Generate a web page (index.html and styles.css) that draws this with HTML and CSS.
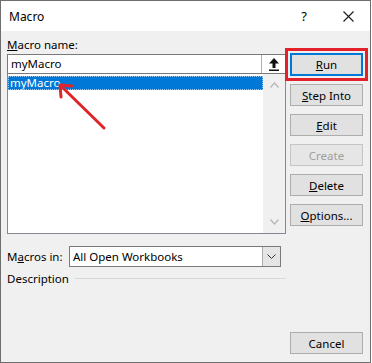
FILE: index.html
```html
<!DOCTYPE html>
<html lang="en">
  <head>
    <meta charset="UTF-8" />
    <title>Macro</title>
    <link rel="stylesheet" href="styles.css">
  </head>
  <body>
    <div class="window">
      <div class="titlebar">
        <span class="title">Macro</span>
        <span class="help">?</span>
        <span class="close">
          <svg width="11" height="11" viewBox="0 0 11 11"><path d="M0.5 0.5 L10.5 10.5 M10.5 0.5 L0.5 10.5" stroke="#1a1a1a" stroke-width="1.1" fill="none" /></svg>
        </span>
      </div>

      <div class="content">
        <div class="left">
          <div class="field-label"><u>M</u>acro name:</div>
          <div class="name-input">
            <span class="name-text">myMacro</span>
            <span class="up-btn">
              <svg width="10" height="13" viewBox="0 0 10 13"><path d="M5 0 L10 5.5 H6.5 V10 H3.5 V5.5 H0 Z" fill="#111" /><rect x="0" y="11.5" width="10" height="1.5" fill="#111" /></svg>
            </span>
          </div>

          <div class="list">
            <div class="list-items">
              <div class="item selected">myMacro</div>
            </div>
            <div class="scrollbar">
              <svg width="9" height="6" viewBox="0 0 9 6"><path d="M0.5 5.5 L4.5 1 L8.5 5.5" stroke="#b5b5b5" stroke-width="1.2" fill="none" /></svg>
              <svg width="9" height="6" viewBox="0 0 9 6"><path d="M0.5 0.5 L4.5 5 L8.5 0.5" stroke="#b5b5b5" stroke-width="1.2" fill="none" /></svg>
            </div>
          </div>

          <div class="macros-in">
            <span class="macros-label">M<u>a</u>cros in:</span>
            <div class="combo">
              <span class="combo-text">All Open Workbooks</span>
              <span class="combo-btn">
                <svg width="9" height="5" viewBox="0 0 9 5"><path d="M0.5 0.5 L4.5 4.5 L8.5 0.5" stroke="#333" stroke-width="1" fill="none" /></svg>
              </span>
            </div>
          </div>

          <div class="description">
            <span>Description</span>
            <span class="rule"></span>
          </div>
        </div>

        <div class="buttons">
          <button class="btn default"><u>R</u>un</button>
          <button class="btn"><u>S</u>tep Into</button>
          <button class="btn"><u>E</u>dit</button>
          <button class="btn disabled">Create</button>
          <button class="btn"><u>D</u>elete</button>
          <button class="btn"><u>O</u>ptions...</button>
          <button class="btn cancel">Cancel</button>
        </div>
      </div>

      <!-- annotation arrow -->
      <svg class="arrow" width="372" height="363" viewBox="0 0 372 363">
        <path d="M104 128 L61 86" stroke="#e0242b" stroke-width="3" fill="none" stroke-linecap="round" />
        <path d="M61 97 L60 85 L72 86" stroke="#e0242b" stroke-width="3" fill="none" stroke-linecap="round" stroke-linejoin="round" />
      </svg>
    </div>
  </body>
</html>
```

FILE: styles.css
```css
html,
body {
  margin: 0;
  padding: 0;
}

body {
  font-family: "Noto Sans", "Open Sans", sans-serif;
  font-size: 11.5px;
  color: #000;
  background: #fff;
}

.window {
  position: relative;
  width: 371px;
  height: 363px;
  box-sizing: border-box;
  border: 1px solid #6e6e6e;
  background-color: #f0f0f0;
  display: flex;
  flex-direction: column;
}

.titlebar {
  height: 30px;
  background-color: #fff;
  display: flex;
  align-items: center;
}

.title {
  margin-left: 8px;
  font-size: 12px;
  flex: 1;
}

.help {
  font-size: 13px;
  margin-right: 36px;
}

.close {
  display: flex;
  margin-right: 16px;
}

.content {
  flex: 1;
  display: flex;
  gap: 4px;
  padding: 0 6px 0 6px;
}

/* left column */
.left {
  width: 279px;
  padding-top: 6px;
}

.field-label {
  height: 16px;
  line-height: 16px;
  margin-bottom: 1px;
}

.name-input {
  display: flex;
  height: 20px;
  box-sizing: border-box;
  border: 1px solid #7a7a7a;
  background-color: #fff;
}

.name-text {
  flex: 1;
  line-height: 18px;
  padding-left: 3px;
}

.up-btn {
  width: 23px;
  display: flex;
  align-items: center;
  justify-content: center;
  border-left: 1px solid #adadad;
  background-color: #fff;
}

.list {
  display: flex;
  height: 160px;
  box-sizing: border-box;
  border: 1px solid #828790;
  border-top: none;
  background-color: #fff;
}

.list-items {
  flex: 1;
  padding: 2px 0 0 0;
}

.item {
  height: 14px;
  line-height: 14px;
  padding-left: 2px;
}

.item.selected {
  background-color: #0078d7;
  color: #fff;
  outline: 1px dotted #9fc8ee;
  outline-offset: -1px;
}

.scrollbar {
  width: 22px;
  background-color: #f0f0f0;
  display: flex;
  flex-direction: column;
  justify-content: space-between;
  align-items: center;
  padding: 8px 0 8px 0;
}

.macros-in {
  display: flex;
  align-items: center;
  margin-top: 12px;
}

.macros-label {
  width: 62px;
}

.combo {
  width: 212px;
  height: 21px;
  box-sizing: border-box;
  border: 1px solid #7a7a7a;
  background-color: #fff;
  display: flex;
}

.combo-text {
  flex: 1;
  line-height: 19px;
  padding-left: 3px;
}

.combo-btn {
  width: 17px;
  background-color: #e5e5e5;
  border-left: 1px solid #adadad;
  display: flex;
  align-items: center;
  justify-content: center;
}

.description {
  display: flex;
  align-items: center;
  margin-top: 3px;
  height: 16px;
}

.rule {
  flex: 1;
  height: 1px;
  margin-left: 6px;
  background-color: #d9d9d9;
}

/* button column */
.buttons {
  width: 73px;
  display: flex;
  flex-direction: column;
  padding-top: 22px;
}

.btn {
  height: 22px;
  width: 73px;
  margin: 0 0 8px 0;
  padding: 0;
  font-family: inherit;
  font-size: 11.5px;
  color: #000;
  background-color: #e1e1e1;
  border: 1px solid #adadad;
}

.btn.default {
  height: 23px;
  margin-bottom: 8px;
  border: 2px solid #0078d7;
  outline: 3px solid #e3212b;
  outline-offset: 2px;
}

.btn.disabled {
  color: #a0a0a0;
  background-color: #e6e6e6;
  border-color: #c5c5c5;
}

.btn.cancel {
  margin-top: auto;
  margin-bottom: 8px;
}

.arrow {
  position: absolute;
  left: -1px;
  top: -1px;
  pointer-events: none;
}
```
